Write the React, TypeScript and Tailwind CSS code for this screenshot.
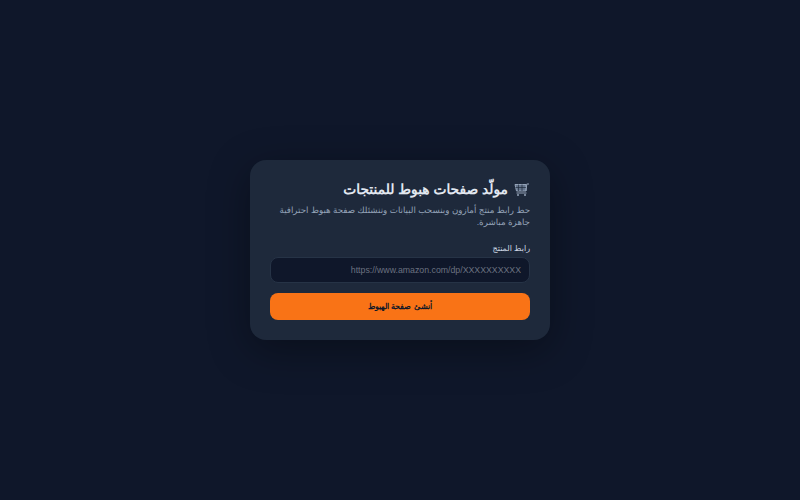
export default function App() {
  return (
    <div dir="rtl" lang="ar" className="min-h-screen bg-[#0f172a] flex items-center justify-center font-['Liberation_Sans','Noto_Sans',sans-serif] [text-rendering:geometricPrecision]">
      <div className="w-[300px] h-[180px] rounded-2xl bg-[#1e293b] p-5 shadow-[0_10px_40px_rgba(0,0,0,0.35)]">
        <h1 className="flex items-center gap-1.5 h-[20px] text-[13.8px] font-semibold text-[#e2e8f0] mb-1">
          <svg width="16" height="14" viewBox="0 0 16 14" fill="none" stroke="#94a3b8" strokeWidth="1" className="shrink-0">
            <path d="M1 1.5h11v6.5H2.5z" fill="#64748b" />
            <path d="M4.5 1.5v6.5M8 1.5v6.5M1.5 4.5h10.5" stroke="#1e293b" strokeWidth="0.7" />
            <path d="M12 8l.8-7H15M2.5 10h10" />
            <circle cx="4" cy="12" r="1" fill="#94a3b8" stroke="none" />
            <circle cx="11" cy="12" r="1" fill="#94a3b8" stroke="none" />
          </svg>
          مولّد صفحات هبوط للمنتجات
        </h1>
        <p className="text-[8.7px] text-[#94a3b8] leading-[12px] mb-[15px]">حط رابط منتج أمازون وبنسحب البيانات وننشئلك صفحة هبوط احترافية جاهزة مباشرة.</p>
        <label className="block text-[8px] leading-[12px] text-[#cbd5e1] mb-[2px]">رابط المنتج</label>
        <input dir="rtl" readOnly placeholder="https://www.amazon.com/dp/XXXXXXXXXX" className="block w-full h-[26px] rounded-lg border border-[#263346] bg-[#0f172a] px-2 text-[8.75px] text-[#94a3b8] placeholder:text-[#6b7280] mb-2.5 outline-none" />
        <button className="block w-full h-[27px] rounded-lg bg-[#f97316] text-[8px] font-bold text-[#111827]">أنشئ صفحة الهبوط</button>
      </div>
    </div>
  );
}
